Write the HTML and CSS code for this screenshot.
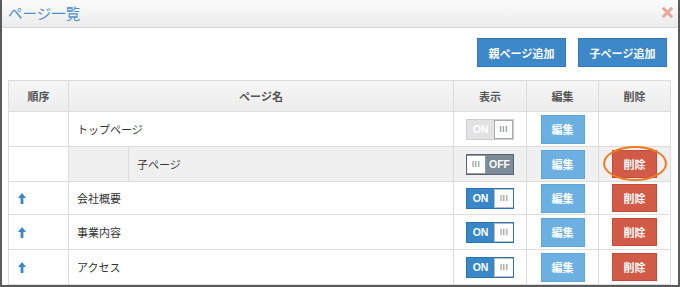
FILE: index.html
```html
<!DOCTYPE html>
<html lang="ja">
<head>
    <meta charset="UTF-8">
    <title>ページ一覧</title>
    <link rel="stylesheet" href="styles.css">
</head>
<body>
    <div class="modal">
        <!-- タイトルバー -->
        <div class="modal-head">
            <div class="modal-title">ページ一覧</div>
            <svg class="close" width="11" height="11" viewBox="0 0 11 11">
                <path d="M1.8 1.8 L9.2 9.2 M9.2 1.8 L1.8 9.2" stroke="#e8a59c" stroke-width="2.8" stroke-linecap="square"/>
            </svg>
        </div>

        <div class="modal-body">
            <div class="actions">
                <button class="btn btn-primary">親ページ追加</button>
                <button class="btn btn-primary">子ページ追加</button>
            </div>

            <table class="page-table">
                <colgroup>
                    <col class="c-order">
                    <col class="c-name">
                    <col class="c-show">
                    <col class="c-edit">
                    <col class="c-del">
                </colgroup>
                <thead>
                    <tr>
                        <th>順序</th>
                        <th>ページ名</th>
                        <th>表示</th>
                        <th>編集</th>
                        <th>削除</th>
                    </tr>
                </thead>
                <tbody>
                    <tr class="r1">
                        <td></td>
                        <td class="name">トップページ</td>
                        <td class="center">
                            <div class="switch disabled"><span class="label">ON</span><span class="handle">III</span></div>
                        </td>
                        <td class="center"><button class="btn btn-edit">編集</button></td>
                        <td></td>
                    </tr>
                    <tr class="child">
                        <td class="plain"></td>
                        <td class="name-child">
                            <span class="indent"></span><span class="text">子ページ</span>
                        </td>
                        <td class="center">
                            <div class="switch off"><span class="handle">III</span><span class="label">OFF</span></div>
                        </td>
                        <td class="center"><button class="btn btn-edit">編集</button></td>
                        <td class="center mark">
                            <button class="btn btn-del">削除</button>
                            <div class="ring"></div>
                        </td>
                    </tr>
                    <tr class="r3">
                        <td class="order"><svg class="up" width="8" height="11" viewBox="0 0 8 11"><path d="M4 0 L8 5 H5.4 V11 H2.6 V5 H0 Z" fill="#3a87c8"/></svg></td>
                        <td class="name">会社概要</td>
                        <td class="center">
                            <div class="switch on"><span class="label">ON</span><span class="handle">III</span></div>
                        </td>
                        <td class="center"><button class="btn btn-edit">編集</button></td>
                        <td class="center"><button class="btn btn-del">削除</button></td>
                    </tr>
                    <tr>
                        <td class="order"><svg class="up" width="8" height="11" viewBox="0 0 8 11"><path d="M4 0 L8 5 H5.4 V11 H2.6 V5 H0 Z" fill="#3a87c8"/></svg></td>
                        <td class="name">事業内容</td>
                        <td class="center">
                            <div class="switch on"><span class="label">ON</span><span class="handle">III</span></div>
                        </td>
                        <td class="center"><button class="btn btn-edit">編集</button></td>
                        <td class="center"><button class="btn btn-del">削除</button></td>
                    </tr>
                    <tr>
                        <td class="order"><svg class="up" width="8" height="11" viewBox="0 0 8 11"><path d="M4 0 L8 5 H5.4 V11 H2.6 V5 H0 Z" fill="#3a87c8"/></svg></td>
                        <td class="name">アクセス</td>
                        <td class="center">
                            <div class="switch on"><span class="label">ON</span><span class="handle">III</span></div>
                        </td>
                        <td class="center"><button class="btn btn-edit">編集</button></td>
                        <td class="center"><button class="btn btn-del">削除</button></td>
                    </tr>
                </tbody>
            </table>
        </div>
    </div>
</body>
</html>
```

FILE: styles.css
```css
* {
    margin: 0;
    padding: 0;
    box-sizing: border-box;
}
body {
    width: 680px;
    height: 287px;
    background: #fff;
    overflow: hidden;
    font-family: "Noto Sans CJK JP", "Noto Sans", sans-serif;
    color: #333;
}
.modal {
    width: 680px;
    height: 287px;
    border: 2px solid #5a5a5a;
    border-top: none;
    overflow: hidden;
    background: #fff;
}
/* タイトルバー */
.modal-head {
    height: 28px;
    display: flex;
    align-items: center;
    justify-content: space-between;
    padding: 0 5px 2px 6px;
    background: linear-gradient(#fbfbfb, #ececec);
    border-bottom: 1px solid #d8d8d8;
}
.modal-title {
    font-size: 14.5px;
    color: #4f92c9;
}
.close {
    display: block;
}
.modal-body {
    padding: 10px 8px 0 6px;
}
.actions {
    display: flex;
    justify-content: flex-end;
    gap: 12px;
    padding-right: 3px;
    margin-bottom: 13px;
}
.btn {
    border: none;
    color: #fff;
    font-family: "Noto Sans CJK JP", sans-serif;
    font-weight: bold;
    font-size: 11px;
    cursor: pointer;
}
.btn-primary {
    width: 89px;
    height: 29px;
    background: #3d88c9;
    border: 1px solid #3579b6;
}
/* 一覧テーブル */
.page-table {
    width: 662px;
    border-collapse: collapse;
    table-layout: fixed;
    font-size: 11px;
}
.c-order { width: 60px; }
.c-name { width: 385px; }
.c-show { width: 73px; }
.c-edit { width: 72px; }
.c-del { width: 72px; }
.page-table th,
.page-table td {
    border: 1px solid #dcdcdc;
}
.page-table th {
    height: 31px;
    background: linear-gradient(#f6f6f6, #ececec);
    color: #555;
    font-weight: bold;
    text-align: center;
}
.page-table td {
    height: 35px;
    padding: 0;
    vertical-align: middle;
}
.page-table tr.r3 td {
    height: 33px;
}
.center {
    text-align: center;
}
.name {
    padding-left: 8px !important;
}
.order {
    padding-left: 9px !important;
}
.up {
    display: block;
}
.child td {
    background: #f0f0f0;
}
.child td.plain {
    background: #fff;
}
.name-child {
    height: 35px;
}
.name-child .indent {
    display: inline-block;
    width: 60px;
    height: 34px;
    border-right: 1px solid #dcdcdc;
    vertical-align: middle;
}
.name-child .text {
    display: inline-block;
    padding-left: 8px;
    vertical-align: middle;
}
/* 表示スイッチ */
.switch {
    display: inline-flex;
    width: 48px;
    height: 21px;
    border: 1px solid;
    vertical-align: middle;
    font-family: "Liberation Sans", sans-serif;
    font-weight: bold;
    font-size: 10.5px;
    overflow: hidden;
}
.switch .label {
    flex: 1;
    display: flex;
    align-items: center;
    justify-content: center;
    color: #fff;
}
.switch .handle {
    width: 19px;
    display: flex;
    align-items: center;
    justify-content: center;
    background: #fff;
    color: #777;
    font-size: 9px;
    font-weight: normal;
    letter-spacing: 0.3px;
}
.switch.on {
    border-color: #2e73b0;
    background: #3a87c8;
}
.switch.on .handle {
    border: 1px solid #bdbdbd;
    border-right: none;
}
.switch.disabled {
    border-color: #cfcfcf;
    background: #e2e2e2;
}
.switch.disabled .handle {
    border: 1px solid #aaa;
}
.switch.off {
    border-color: #56636e;
    background: #7c8b97;
}
.switch.off .handle {
    border: 1px solid #999;
    border-left: none;
}
/* 編集・削除 */
.btn-edit {
    width: 44px;
    height: 29px;
    background: #6cb0e2;
    border: 1px solid #5ea5d9;
}
.btn-del {
    width: 45px;
    height: 28px;
    background: #d25b47;
    border: 1px solid #c44d3a;
}
.mark {
    position: relative;
}
.ring {
    position: absolute;
    left: 4px;
    top: -1px;
    width: 64px;
    height: 35px;
    border: 2.5px solid #f27b22;
    border-radius: 50%;
}
```
